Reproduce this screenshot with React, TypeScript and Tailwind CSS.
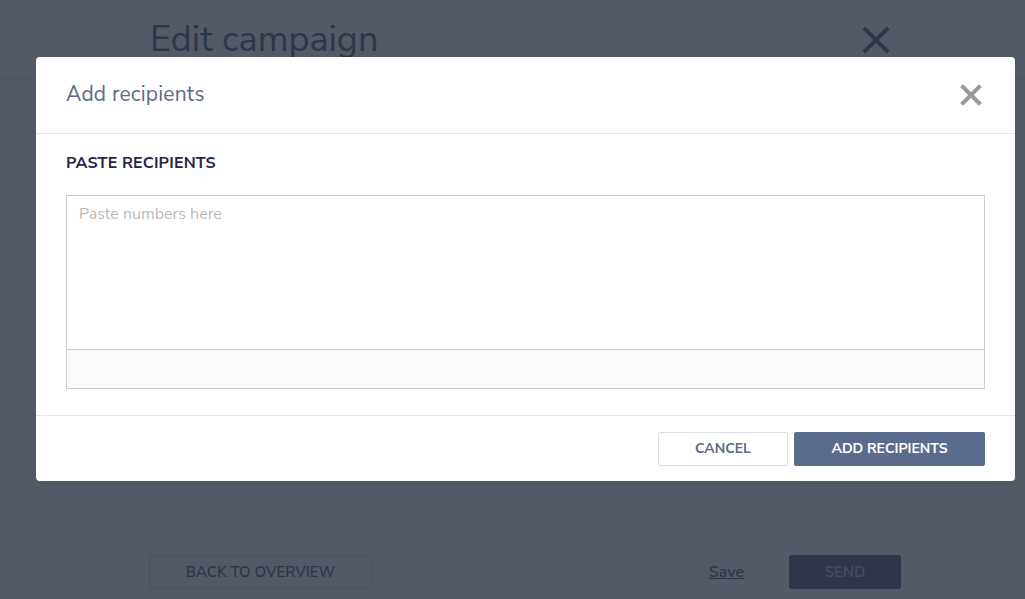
import React, { useState } from 'react';

function CloseIcon({ className, weight = 3 }: { className?: string; weight?: number }) {
  return (
    <svg viewBox="0 0 24 24" className={className} fill="none" stroke="currentColor" strokeWidth={weight} strokeLinecap="square">
      <path d="M4 4L20 20M20 4L4 20" />
    </svg>
  );
}

export default function App() {
  const [numbers, setNumbers] = useState('');

  return (
    <div className="relative h-[599px] overflow-hidden bg-[#f8f9fb] font-['Nunito_Sans','Open_Sans',sans-serif]">
      {/* page behind the dialog */}
      <div className="flex h-full flex-col">
        <header className="flex h-[80px] items-center justify-between border-b border-[#e6e8ee] bg-white pl-[150px] pr-[133px]">
          <h1 className="text-[36px] font-normal text-[#4b536b]">Edit campaign</h1>
          <CloseIcon className="h-[32px] w-[32px] text-[#4b536b]" />
        </header>
        <main className="flex-1" />
        <footer className="flex h-[72px] items-start border-t border-[#e6e8ee] bg-white pl-[149px] pr-[124px] pt-[27px]">
          <button className="h-[34px] w-[223px] rounded-[3px] border border-[#d4d8e0] text-[15px] font-semibold text-[#4b536b]">
            BACK TO OVERVIEW
          </button>
          <div className="flex-1" />
          <button className="mr-[45px] h-[34px] text-[16px] font-semibold text-[#4b536b] underline">Save</button>
          <button className="h-[34px] w-[112px] rounded-[3px] bg-[#4b5375] text-[15px] font-semibold text-[#b8c2d8]">SEND</button>
        </footer>
      </div>

      {/* overlay */}
      <div className="absolute inset-0 bg-[rgba(40,48,62,0.8)] pl-[36px] pr-[10px] pt-[57px]">
        <div className="w-[979px] rounded-[4px] bg-white">
          <div className="flex h-[77px] items-center justify-between border-b border-[#e5e5e5] pl-[30px] pr-[32px]">
            <h2 className="text-[21px] tracking-[0.2px] text-[#5a6a8b]">Add recipients</h2>
            <CloseIcon className="h-[24px] w-[24px] text-[#999999]" weight={4} />
          </div>
          <div className="border-b border-[#e5e5e5] px-[30px] pb-[26px] pt-[17px]">
            <div className="text-[16px] font-bold tracking-[0.2px] text-[#25244a]">PASTE RECIPIENTS</div>
            <div className="mt-[20px] border border-[#cccccc]">
              <textarea
                value={numbers}
                onChange={(e) => setNumbers(e.target.value)}
                placeholder="Paste numbers here"
                className="block h-[154px] w-full resize-none border-b border-[#cccccc] px-[12px] py-[6px] text-[16px] text-[#333] outline-none placeholder:text-[#bbbbbb]"
              />
              <div className="h-[38px] bg-[#fbfbfd]" />
            </div>
          </div>
          <div className="flex h-[65px] items-center justify-end gap-[6px] pr-[30px]">
            <button className="h-[34px] w-[130px] rounded-[2px] border border-[#dcdfe6] text-[14px] font-bold text-[#5a6a8b]">
              CANCEL
            </button>
            <button className="h-[34px] w-[191px] rounded-[2px] bg-[#5a6b8c] text-[14px] font-bold text-white">
              ADD RECIPIENTS
            </button>
          </div>
        </div>
      </div>
    </div>
  );
}
